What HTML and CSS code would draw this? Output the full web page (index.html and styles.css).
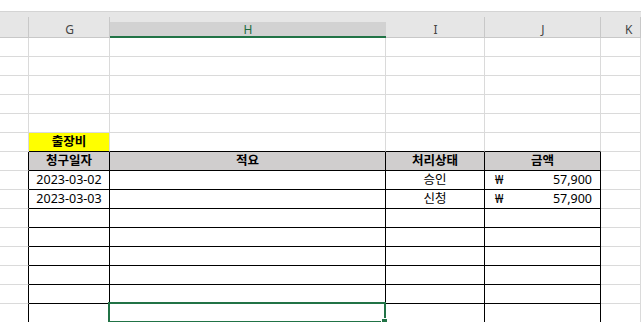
FILE: index.html
```html
<!DOCTYPE html>
<html lang="ko">
<head>
    <meta charset="UTF-8">
    <meta name="viewport" content="width=device-width, initial-scale=1.0">
    <title>출장비</title>
    <link rel="stylesheet" href="styles.css">
</head>
<body>
    <div class="sheet">
        <!-- strip above the column letters -->
        <div class="top-gap"></div>

        <!-- Column letters -->
        <div class="col-heads">
            <div class="col-head"></div>
            <div class="col-head">G</div>
            <div class="col-head active">H</div>
            <div class="col-head">I</div>
            <div class="col-head">J</div>
            <div class="col-head last">K</div>
        </div>

        <!-- Cells -->
        <div class="cells">
            <!-- rows 1-5: empty -->
            <div class="cell"></div><div class="cell"></div><div class="cell"></div><div class="cell"></div><div class="cell"></div><div class="cell"></div>
            <div class="cell"></div><div class="cell"></div><div class="cell"></div><div class="cell"></div><div class="cell"></div><div class="cell"></div>
            <div class="cell"></div><div class="cell"></div><div class="cell"></div><div class="cell"></div><div class="cell"></div><div class="cell"></div>
            <div class="cell"></div><div class="cell"></div><div class="cell"></div><div class="cell"></div><div class="cell"></div><div class="cell"></div>
            <div class="cell"></div><div class="cell"></div><div class="cell"></div><div class="cell"></div><div class="cell"></div><div class="cell"></div>

            <!-- title -->
            <div class="cell"></div>
            <div class="cell title edge-bottom">출장비</div>
            <div class="cell edge-bottom"></div>
            <div class="cell edge-bottom"></div>
            <div class="cell edge-bottom"></div>
            <div class="cell"></div>

            <!-- table header -->
            <div class="cell edge-right"></div>
            <div class="cell boxed head">청구일자</div>
            <div class="cell boxed head">적요</div>
            <div class="cell boxed head">처리상태</div>
            <div class="cell boxed head">금액</div>
            <div class="cell"></div>

            <div class="cell edge-right"></div>
            <div class="cell boxed center">2023-03-02</div>
            <div class="cell boxed"></div>
            <div class="cell boxed center">승인</div>
            <div class="cell boxed money"><span>₩</span><span>57,900</span></div>
            <div class="cell"></div>

            <div class="cell edge-right"></div>
            <div class="cell boxed center">2023-03-03</div>
            <div class="cell boxed"></div>
            <div class="cell boxed center">신청</div>
            <div class="cell boxed money"><span>₩</span><span>57,900</span></div>
            <div class="cell"></div>

            <!-- empty table rows -->
            <div class="cell edge-right"></div><div class="cell boxed"></div><div class="cell boxed"></div><div class="cell boxed"></div><div class="cell boxed"></div><div class="cell"></div>
            <div class="cell edge-right"></div><div class="cell boxed"></div><div class="cell boxed"></div><div class="cell boxed"></div><div class="cell boxed"></div><div class="cell"></div>
            <div class="cell edge-right"></div><div class="cell boxed"></div><div class="cell boxed"></div><div class="cell boxed"></div><div class="cell boxed"></div><div class="cell"></div>
            <div class="cell edge-right"></div><div class="cell boxed"></div><div class="cell boxed"></div><div class="cell boxed"></div><div class="cell boxed"></div><div class="cell"></div>
            <div class="cell edge-right"></div><div class="cell boxed"></div><div class="cell boxed"></div><div class="cell boxed"></div><div class="cell boxed"></div><div class="cell"></div>
            <div class="cell edge-right"></div><div class="cell boxed"></div><div class="cell boxed selected"></div><div class="cell boxed"></div><div class="cell boxed"></div><div class="cell"></div>
        </div>
    </div>
</body>
</html>
```

FILE: styles.css
```css
body {
    margin: 0;
    padding: 0;
    background: #ffffff;
    font-family: "Noto Sans", "Noto Sans CJK KR", sans-serif;
    font-size: 12.5px;
    color: #000000;
}

.sheet {
    height: 322px;
    overflow: hidden;
}

.top-gap {
    height: 11px;
    border-bottom: 1px solid #d4d4d4;
}

/* Column widths shared by the letters and the cells */
.col-heads,
.cells {
    display: grid;
    grid-template-columns: 29px 81px 276px 99px 116px 1fr;
}

.col-head {
    box-sizing: border-box;
    height: 26px;
    padding-top: 10px;
    line-height: 15px;
    text-align: center;
    font-size: 12px;
    color: #444444;
    background:
        linear-gradient(#c8c8c8, #c8c8c8) right 5px / 1px 100% no-repeat,
        #e6e6e6;
    border-bottom: 1px solid #c8c8c8;
}

.col-head.active {
    color: #1e6b41;
    background:
        linear-gradient(#d2d2d2, #d2d2d2) 0 10px / 100% 100% no-repeat,
        #e6e6e6;
    border-bottom-color: #217346;
    box-shadow: inset 0 -1px 0 #217346;
}

.col-head.last {
    text-align: left;
    padding-left: 24px;
}

.cells {
    grid-auto-rows: 19px;
}

.cell {
    box-sizing: border-box;
    border-right: 1px solid #dadada;
    border-bottom: 1px solid #dadada;
    line-height: 18px;
    white-space: nowrap;
}

/* table borders */
.boxed {
    border-color: #000000;
}

.edge-right {
    border-right-color: #000000;
}

.edge-bottom {
    border-bottom-color: #000000;
}

.title {
    background: #ffff00;
    font-weight: bold;
    text-align: center;
}

.head {
    background: #d0cece;
    font-weight: bold;
    text-align: center;
}

.center {
    text-align: center;
}

.money {
    display: flex;
    justify-content: space-between;
    padding: 0 8px 0 10px;
}

/* active cell frame */
.selected {
    position: relative;
}

.selected::after {
    content: "";
    position: absolute;
    top: -2px;
    left: -2px;
    right: -1px;
    bottom: -1px;
    border: 2px solid #217346;
}

.selected::before {
    content: "";
    position: absolute;
    right: -3px;
    bottom: -3px;
    width: 5px;
    height: 5px;
    background: #217346;
    border: 1px solid #ffffff;
    z-index: 1;
}
```
